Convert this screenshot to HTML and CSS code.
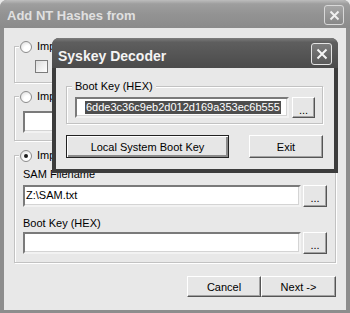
FILE: index.html
```html
<!DOCTYPE html>
<html lang="en">
<head>
    <meta charset="UTF-8">
    <title>Add NT Hashes from</title>
    <link rel="stylesheet" href="styles.css">
</head>
<body>
    <div class="window">
        <div class="titlebar">
            <span class="title">Add NT Hashes from</span>
            <span class="close">
                <svg width="11" height="11" viewBox="0 0 11 11"><path d="M1.5 1.5L9.5 9.5M9.5 1.5L1.5 9.5" stroke="#f0f0f0" stroke-width="2"/></svg>
            </span>
        </div>

        <div class="client">
            <!-- Local registry (label mostly hidden by the dialog) -->
            <div class="group group-registry">
                <div class="group-head"><span class="radio"></span><span class="clip">Import from local registry</span></div>
                <div class="check-row"><span class="checkbox"></span></div>
            </div>

            <!-- Remote -->
            <div class="group group-remote">
                <div class="group-head"><span class="radio"></span><span class="clip">Import from remote computer</span></div>
                <div class="textbox"></div>
            </div>

            <!-- SAM files -->
            <div class="group group-files">
                <div class="group-head"><span class="radio checked"></span><span class="clip">Import from SAM and SYSTEM files</span></div>
                <div class="label">SAM Filename</div>
                <div class="field-row">
                    <div class="textbox">Z:\SAM.txt</div>
                    <button class="btn browse">...</button>
                </div>
                <div class="label label-key">Boot Key (HEX)</div>
                <div class="field-row row-key">
                    <div class="textbox"></div>
                    <button class="btn browse">...</button>
                </div>
            </div>

            <div class="actions">
                <button class="btn btn-cancel">Cancel</button>
                <button class="btn btn-next">Next -&gt;</button>
            </div>
        </div>

        <!-- Syskey Decoder dialog on top -->
        <div class="dialog">
            <div class="titlebar">
                <span class="title">Syskey Decoder</span>
                <span class="close">
                    <svg width="12" height="12" viewBox="0 0 12 12"><path d="M1.5 1.5L10.5 10.5M10.5 1.5L1.5 10.5" stroke="#f6f6f6" stroke-width="2"/></svg>
                </span>
            </div>
            <div class="dialog-client">
                <div class="group key-group">
                    <div class="group-head">Boot Key (HEX)</div>
                    <div class="field-row">
                        <div class="textbox hex"><span class="selected">6dde3c36c9eb2d012d169a353ec6b555</span></div>
                        <button class="btn browse">...</button>
                    </div>
                </div>
                <div class="dialog-actions">
                    <button class="btn btn-default">Local System Boot Key</button>
                    <button class="btn btn-exit">Exit</button>
                </div>
            </div>
        </div>
    </div>
</body>
</html>
```

FILE: styles.css
```css
* {
    box-sizing: border-box;
}

body {
    margin: 0;
    font-family: "Liberation Sans", Arial, sans-serif;
    font-size: 11px;
    color: #000;
    background: #e8e8e8;
}

/* Main window */
.window {
    position: relative;
    width: 350px;
    height: 313px;
    background: #8d8d8d;
    border-radius: 7px 7px 0 0;
    padding: 0 4px 3px;
    display: flex;
    flex-direction: column;
}

.titlebar {
    flex: none;
    display: flex;
    align-items: flex-start;
    height: 28px;
    margin: 0 -4px;
    padding: 0 6px 0 7px;
    border-radius: 7px 7px 0 0;
    background: linear-gradient(#bdbdbd, #9e9e9e 14%, #939393 50%, #8b8b8b);
}

.title {
    font-size: 13px;
    font-weight: bold;
    line-height: 15px;
    margin-top: 8px;
    color: #e0e0e0;
}

.close {
    margin: 5px 0 0 auto;
    width: 20px;
    height: 20px;
    border: 1px solid #d8d8d8;
    border-radius: 3px;
    background: linear-gradient(#a6a6a6, #888);
    display: flex;
    align-items: center;
    justify-content: center;
}

.client {
    flex: 1;
    background: #e8e8e8;
    padding: 18px 10px 0;
}

/* Group boxes */
.group {
    border: 1px solid #c2c2c2;
    box-shadow: 1px 1px 0 #fff, inset 1px 1px 0 #fff;
    padding: 0 8px 9px;
}

.group-head {
    display: flex;
    align-items: center;
    gap: 5px;
    width: max-content;
    height: 13px;
    line-height: 13px;
    margin: -7px 0 0 -4px;
    padding: 0 3px 0 1px;
    background: #e8e8e8;
}

/* the dialog covers the rest of these labels */
.clip {
    width: 15px;
    overflow: hidden;
    white-space: nowrap;
}

.radio {
    flex: none;
    position: relative;
    width: 12px;
    height: 12px;
    border: 1px solid #8c8c8c;
    border-radius: 50%;
    background: radial-gradient(circle at 65% 70%, #fff 35%, #d6d6d6);
}

.radio.checked::after {
    content: "";
    position: absolute;
    left: 3px;
    top: 3px;
    width: 4px;
    height: 4px;
    border-radius: 50%;
    background: #1e1e1e;
}

.check-row {
    display: flex;
    align-items: center;
    gap: 5px;
    margin: 7px 0 0 12px;
    height: 13px;
}

.checkbox {
    flex: none;
    width: 13px;
    height: 13px;
    border: 1px solid #7c7c7c;
    background: linear-gradient(135deg, #dcdcdc, #fff);
}

.group-remote {
    margin-top: 13px;
    padding-bottom: 7px;
}

.group-remote .textbox {
    margin-top: 8px;
    height: 22px;
}

.group-files {
    margin-top: 14px;
    padding-bottom: 8px;
}

.label {
    margin-top: 6px;
    line-height: 13px;
}

.label-key {
    margin-top: 10px;
}

.field-row {
    display: flex;
    gap: 2px;
    height: 22px;
    margin-top: 4px;
}

.row-key {
    margin-top: 2px;
}

.textbox {
    flex: 1;
    background: #fff;
    border: 2px solid;
    border-color: #7a7a7a #f2f2f2 #f2f2f2 #7a7a7a;
    box-shadow: inset -1px -1px 0 #d4d4d4;
    line-height: 17px;
    padding: 0 1px;
    white-space: nowrap;
    overflow: hidden;
}

/* Buttons */
.btn {
    font-family: inherit;
    font-size: 11px;
    color: #000;
    padding: 0;
    background: #e6e6e6;
    border: 1px solid;
    border-color: #fff #555 #555 #fff;
    box-shadow: inset -1px -1px 0 #a2a2a2;
}

.browse {
    flex: none;
    width: 24px;
    padding-top: 4px;
}

.actions {
    display: flex;
    justify-content: flex-end;
    margin-top: 13px;
}

.btn-cancel {
    width: 74px;
    height: 21px;
}

.btn-next {
    width: 75px;
    height: 21px;
}

/* Syskey dialog */
.dialog {
    position: absolute;
    left: 52px;
    top: 38px;
    width: 286px;
    height: 135px;
    background: #3c3c3c;
    border-radius: 7px 7px 0 0;
    padding: 0 4px 4px;
    display: flex;
    flex-direction: column;
}

.dialog .titlebar {
    height: 30px;
    padding: 0 6px;
    background: linear-gradient(#7e7e7e, #5e5e5e 14%, #555 55%, #4b4b4b);
}

.dialog .title {
    font-size: 14px;
    line-height: 16px;
    margin-top: 10px;
    color: #f4f4f4;
}

.dialog .close {
    width: 21px;
    height: 22px;
    border-color: #e4e4e4;
    background: linear-gradient(#7c7c7c, #5a5a5a);
}

.dialog-client {
    flex: 1;
    background: #e8e8e8;
    padding: 18px 11px 0 10px;
}

.key-group {
    padding: 0 7px 5px 8px;
}

.key-group .group-head {
    margin-left: -3px;
    padding: 0 3px;
}

.key-group .field-row {
    gap: 3px;
    height: 21px;
}

.key-group .browse {
    width: 23px;
}

.hex {
    padding-left: 8px;
    line-height: 16px;
}

.selected {
    display: inline-block;
    line-height: 13px;
    padding: 0 1px;
    background: #4e4e4e;
    color: #fff;
}

.dialog-actions {
    display: flex;
    gap: 20px;
    margin-top: 11px;
}

.btn-default {
    width: 163px;
    height: 23px;
    border-color: #222;
    box-shadow: inset 1px 1px 0 #fff, inset -2px -2px 0 #8a8a8a;
}

.btn-exit {
    width: 74px;
    height: 23px;
}
```
